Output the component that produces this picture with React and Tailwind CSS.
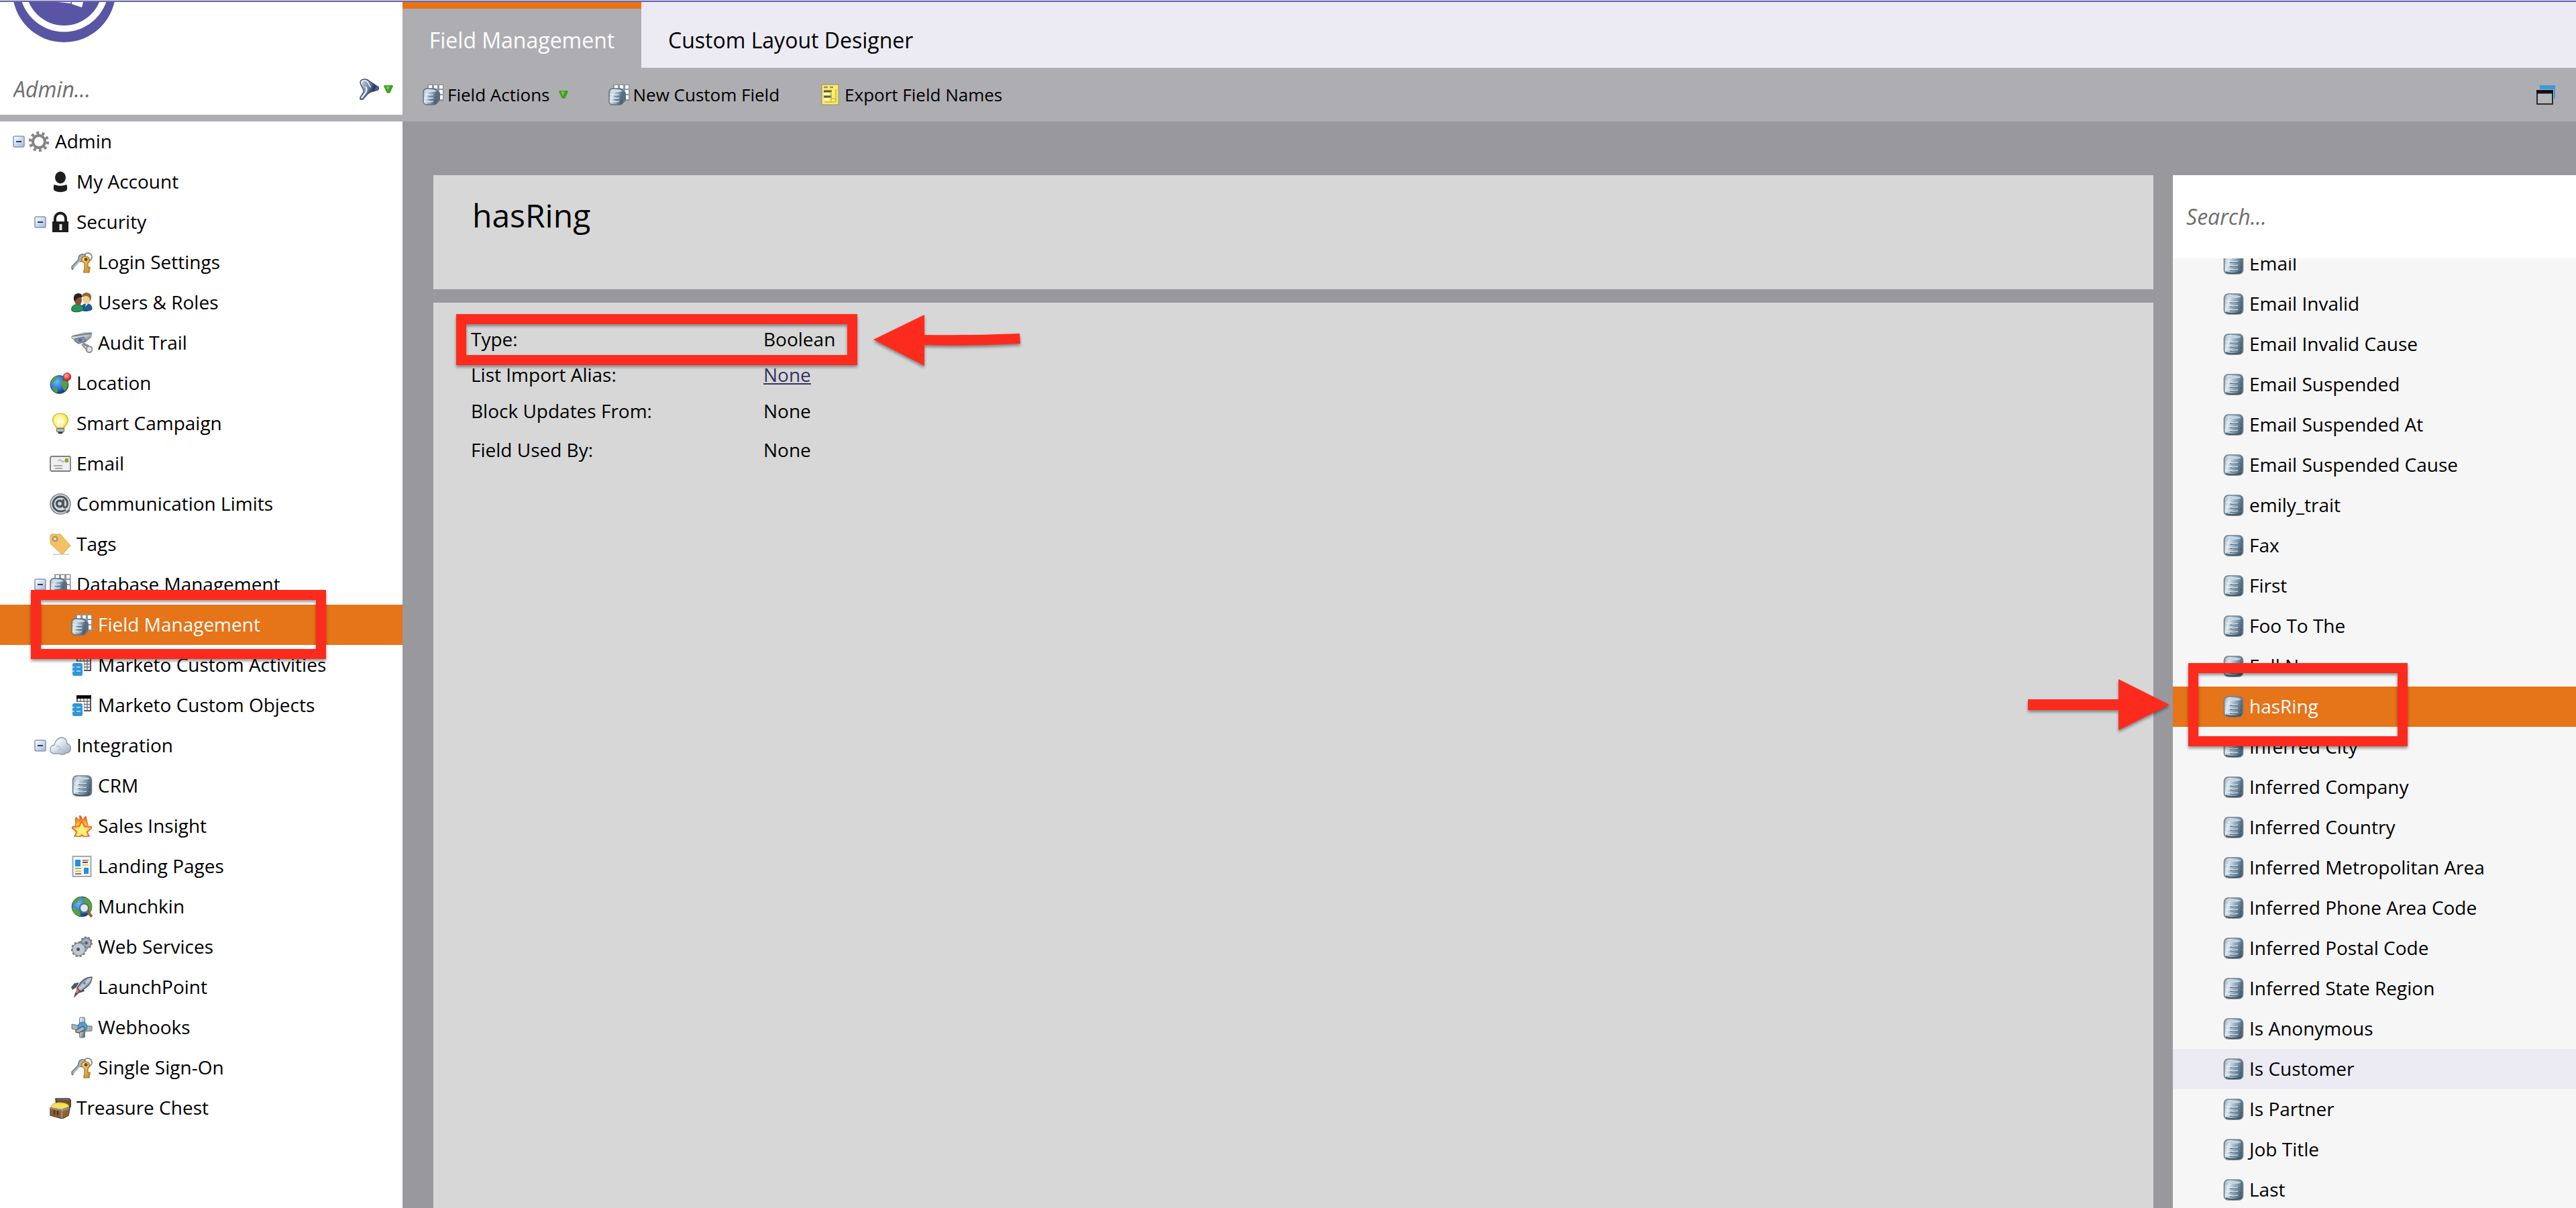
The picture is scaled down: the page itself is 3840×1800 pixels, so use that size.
import { useState } from 'react';

/* ---------- Icons ---------- */

// gradients shared by all the small icons
function IconDefs() {
  return (
    <svg className="absolute h-0 w-0" aria-hidden="true">
      <defs>
        <linearGradient id="steel" x1="0" x2="1" y1="0" y2="0.3">
          <stop offset="0" stopColor="#8b9cab" />
          <stop offset="0.3" stopColor="#dbe8f1" />
          <stop offset="0.65" stopColor="#8fa8bb" />
          <stop offset="1" stopColor="#4b6173" />
        </linearGradient>
        <linearGradient id="steelDiag" x1="0" x2="1" y1="0" y2="1">
          <stop offset="0" stopColor="#f1f4f6" />
          <stop offset="0.5" stopColor="#b9c2c9" />
          <stop offset="1" stopColor="#4b5964" />
        </linearGradient>
        <linearGradient id="rocketFill" x1="0" x2="1" y1="0" y2="1">
          <stop offset="0.3" stopColor="#6b7d8b" />
          <stop offset="0.5" stopColor="#c8d5de" />
          <stop offset="0.75" stopColor="#566774" />
        </linearGradient>
        <linearGradient id="funnelFill" x1="0" x2="1" y1="0" y2="0.4">
          <stop offset="0" stopColor="#dfe6ef" />
          <stop offset="0.5" stopColor="#7688a3" />
          <stop offset="0.8" stopColor="#22375f" />
          <stop offset="1" stopColor="#64779a" />
        </linearGradient>
        <linearGradient id="toggleFill" x1="0" x2="1" y1="0" y2="1">
          <stop offset="0" stopColor="#ffffff" />
          <stop offset="1" stopColor="#a3b6d8" />
        </linearGradient>
        <linearGradient id="gold" x1="0" x2="1" y1="0" y2="1">
          <stop offset="0" stopColor="#ffe48a" />
          <stop offset="1" stopColor="#c98520" />
        </linearGradient>
        <linearGradient id="cloudFill" x1="0" x2="1" y1="0" y2="1">
          <stop offset="0.2" stopColor="#ffffff" />
          <stop offset="1" stopColor="#93a8ba" />
        </linearGradient>
        <linearGradient id="flame" x1="0" x2="0" y1="0" y2="1">
          <stop offset="0" stopColor="#e2401b" />
          <stop offset="0.5" stopColor="#f99a1f" />
          <stop offset="1" stopColor="#ffd23c" />
        </linearGradient>
        <radialGradient id="ocean" cx="0.35" cy="0.35" r="0.7">
          <stop offset="0" stopColor="#6cb8ff" />
          <stop offset="0.6" stopColor="#2a71cc" />
          <stop offset="1" stopColor="#0c3270" />
        </radialGradient>
        <radialGradient id="bulbFill" cx="0.45" cy="0.45" r="0.6">
          <stop offset="0" stopColor="#fffde0" />
          <stop offset="0.6" stopColor="#fff27a" />
          <stop offset="1" stopColor="#e0c81f" />
        </radialGradient>
        <radialGradient id="pin" cx="0.4" cy="0.35" r="0.6">
          <stop offset="0" stopColor="#ffb3ae" />
          <stop offset="1" stopColor="#d41c1c" />
        </radialGradient>
      </defs>
    </svg>
  );
}

function Icon({ children, className = 'h-8 w-8' }) {
  return (
    <svg viewBox="0 0 32 32" className={`${className} flex-shrink-0`} fill="none" aria-hidden="true">
      {children}
    </svg>
  );
}

const GearIcon = () => (
  <Icon>
    <circle cx="16" cy="16" r="13" stroke="#858585" strokeWidth="4.500" strokeDasharray="4 4.168" />
    <circle cx="16" cy="16" r="9" stroke="#858585" strokeWidth="4" />
  </Icon>
);

const PersonIcon = () => (
  <Icon>
    <ellipse cx="16" cy="9.5" rx="8" ry="9" fill="#1d1d1d" />
    <path d="M7 20c5 2.400 13 2.400 18 0 1.500 2 1.500 6 .5 8.500-5 3.500-14 3.500-19 0C5.500 26 5.500 22 7 20z" fill="#1d1d1d" />
  </Icon>
);

const LockIcon = () => (
  <Icon>
    <path d="M8 15v-4.500a8 8 0 0 1 16 0V15" stroke="#1d1d1d" strokeWidth="4" />
    <rect x="4" y="15" width="24" height="16" fill="#1d1d1d" />
    <rect x="14.500" y="19" width="4" height="9" fill="#e8e8e8" />
  </Icon>
);

const KeysIcon = () => (
  <Icon>
    <circle cx="25" cy="8" r="6" stroke="#8b8f93" strokeWidth="2" />
    <path d="M12 6c3-3.500 8-3 9.500 0 1 3-1 7.500-5 8l-3.500 1-11 11.500L1 26v-4l9-9z" fill="#aab0b5" stroke="#666c71" strokeWidth="1.200" />
    <path d="M4 25l9-10" stroke="#e9edf0" strokeWidth="1.500" />
    <path d="M16 10c2-4 9-4 11 0 1.500 3 0 6-2 7v6h3v3h-1v5h-8v-3h1V17c-3-1-5-4-4-7z" fill="url(#gold)" stroke="#a16a18" strokeWidth="1.200" />
    <circle cx="22" cy="11.500" r="2.500" fill="#7a4b12" />
  </Icon>
);

const UsersIcon = () => (
  <Icon>
    <path d="M15 27c0-5 2-9 6-9h4c4 0 6 3 6 8-4 3-12 3-16 1z" fill="#1d5a9e" stroke="#123a6b" />
    <ellipse cx="23" cy="10.500" rx="6" ry="8" fill="#f0cf94" />
    <path d="M16 8c0-5 3-7 7-7s8 3 7 8c0 2-1 4-2 4 0-4-2-7-6-7-2 0-4 1-6 2z" fill="#8f6a35" />
    <path d="M22 18l-1 4 4-4z" fill="#fff" />
    <path d="M1 28c-1-5 1-8 5-9h7c4 1 6 4 5 8-4 3-13 4-17 1z" fill="#22955a" stroke="#0f5a33" />
    <ellipse cx="10.500" cy="12" rx="5.500" ry="8" fill="#8c5233" />
    <path d="M4 11c-1-6 3-9 7-9 5 0 6 4 5 6-3 0-5 0-6 1-2 1-3 3-4 5-1 0-2-1-2-3z" fill="#26221f" />
  </Icon>
);

const CameraIcon = () => (
  <Icon>
    <path d="M1 6l19-5h11l-2 7-7 6-12 3-6-6-3-2z" fill="url(#steelDiag)" stroke="#7d8184" />
    <path d="M2 6l20-3 8-1" stroke="#6f7377" strokeWidth="1.500" />
    <path d="M5 10l14-3 3 6-10 4-6-3z" fill="#8e9499" stroke="#6a6f74" />
    <rect x="11" y="9.500" width="5" height="4.500" fill="#4b6bb5" />
    <path d="M18 16c2 3 5 4 8 5" stroke="#8c9094" strokeWidth="4" />
    <circle cx="27" cy="25.500" r="4.500" fill="#e3e5e7" stroke="#8c9094" strokeWidth="2" />
    <path d="M16 18l8 9" stroke="#8c9094" strokeWidth="2" />
  </Icon>
);

const GlobePinIcon = () => (
  <Icon>
    <circle cx="14.500" cy="18" r="13.500" fill="url(#ocean)" stroke="#28548c" />
    <path d="M3 11c3-4 7-6 10-6 1 2-2 3-3 5s-3 2-4 4-3 1-4 1zM18 13c3-1 7-1 9 1 1 4 0 9-4 13-3 0-3-4-4-7-2-2-3-5-1-7zM5 22c3 0 6 2 7 4 0 3-1 4-2 4-3-1-5-4-6-7z" fill="#57a03c" />
    <path d="M20 12l4-5" stroke="#555" strokeWidth="2" />
    <circle cx="26" cy="6.500" r="5.800" fill="url(#pin)" stroke="#b52323" />
  </Icon>
);

const BulbIcon = () => (
  <Icon>
    <path d="M16 1C8.500 1 4 6 4.500 12c.5 5 5 7 6 12h11c1-5 5.500-7 6-12C28 6 23.500 1 16 1z" fill="url(#bulbFill)" stroke="#c7b43a" strokeWidth="1.200" />
    <path d="M14 22l-2-9 4 2 4-2-2 9" stroke="#fff" strokeWidth="1.500" />
    <rect x="10.500" y="23" width="11" height="6" rx="1.500" fill="#9aa0a6" stroke="#5d6368" />
    <path d="M11 26h10" stroke="#e5e8ea" />
    <path d="M13 30h6" stroke="#2c3034" strokeWidth="2.500" />
  </Icon>
);

const EnvelopeIcon = () => (
  <Icon>
    <rect x="1" y="5" width="30" height="22" rx="2" fill="#efefef" stroke="#7b7f82" strokeWidth="1.800" />
    <rect x="23" y="8" width="5" height="6" fill="#a99a2c" />
    <path d="M13 12c2-3 4-2 5 0s3 1 5-1" stroke="#9fa6bb" strokeWidth="1.500" />
    <path d="M6 19h13M8 23h11" stroke="#a6a8aa" strokeWidth="1.800" />
  </Icon>
);

const AtIcon = () => (
  <Icon>
    <circle cx="16" cy="16" r="15" fill="#d4dae0" stroke="#7c858d" strokeWidth="1.500" />
    <circle cx="15" cy="15.500" r="4.500" stroke="#4d565e" strokeWidth="3.500" />
    <path d="M20.500 9v9c0 5 6 4 6-2.500C26.500 9 22 5 16 5S5 10 5 16s5 11 11 11c3 0 6-1 8-2" stroke="#4d565e" strokeWidth="3" />
    <path d="M25 29l5-4" stroke="#6c757c" strokeWidth="3" />
  </Icon>
);

const TagIcon = () => (
  <Icon>
    <path d="M5 31h24" stroke="#c9c9c9" strokeWidth="1.500" />
    <path d="M1 3l2-2h13l15 17-11 12h-3L1 15z" fill="#f2c163" stroke="#e0a948" />
    <circle cx="8" cy="8" r="3.300" fill="#f7dca4" stroke="#9b9078" strokeWidth="2" />
  </Icon>
);

const DatabaseIcon = () => (
  <Icon>
    <rect x="2.500" y="1" width="28" height="30" rx="6" fill="url(#steel)" stroke="#6c7f8f" strokeWidth="1.600" />
    <path d="M5 5c3-2.500 20-2.500 23 0-4 2.500-19 2.500-23 0z" fill="#c6d6e2" />
    <path d="M5 11c5 2.500 14 2.500 18 1M5 17c5 2.500 14 2.500 18 1M5 23c5 2.500 14 2.500 18 1" stroke="#e9f1f7" strokeWidth="1.300" />
    <path d="M11 14c6 1 12 0 18-2M11 20c6 1 12 0 18-2M11 26c6 1 12 0 18-2" stroke="#5f788b" strokeWidth="1.300" />
    <path d="M5 28c5 3 18 3 23 0" stroke="#41525f" strokeWidth="2" />
  </Icon>
);

const FieldIcon = () => (
  <Icon>
    <rect x="7" y="0.500" width="24.500" height="25" fill="#8b959c" />
    <path d="M9 2h5v5H9zM17 2h5v5h-5zM25 2h5v5h-5zM17 9h5v6h-5zM25 9h5v6h-5zM25 17h5v6h-5z" fill="#fff" />
    <path d="M21 10l5 3v11l-5 6z" fill="#5e6d79" />
    <rect x="1" y="7" width="21" height="24" rx="5" fill="url(#steel)" stroke="#5f707e" strokeWidth="1.400" />
    <path d="M2 10.500c3-2.500 16-2.500 19 0-3 2-16 2-19 0z" fill="#cfdce5" />
    <path d="M2 15c5 2 10 2 14 1M2 20c5 2 10 2 14 1M2 25c5 2 10 2 14 1" stroke="#e9f1f7" strokeWidth="1.200" />
    <path d="M8 18c5 1 9 0 13-1M8 23c5 1 9 0 13-1" stroke="#5f788b" strokeWidth="1.200" />
  </Icon>
);

const CustomObjectIcon = () => (
  <Icon>
    <rect x="9" y="2" width="20" height="22" fill="#fff" stroke="#555" strokeWidth="2" />
    <path d="M8 3.500h22" stroke="#000" strokeWidth="5" />
    <path d="M9 10h20M9 14.500h20M9 19h20M14 6v18M19 6v18M24 6v18" stroke="#6b6b6b" strokeWidth="1.300" />
    <rect x="1" y="11" width="18" height="21" fill="#fff" />
    <rect x="2" y="13" width="15" height="19" rx="2.500" fill="#2f96d8" />
    <path d="M2 19h3M8 19h6M2 25h3M8 25h6" stroke="#bfe1f5" strokeWidth="1.500" />
  </Icon>
);

const CloudIcon = () => (
  <Icon>
    <path d="M8 28c-5 0-8-3-7-7 0-3 3-6 6-6 1-6 6-11 12-11 5 1 7 5 7 9 4 1 6 5 5 9-1 4-4 5-7 5-2 3-7 3-9 1z" fill="url(#cloudFill)" stroke="#8d9ba7" strokeWidth="1.400" />
    <path d="M12 24c2-3 6-4 9-1M10 17c3-1 6 1 6 3" stroke="#b4c3cf" strokeWidth="1.500" />
  </Icon>
);

const FlameIcon = () => (
  <Icon>
    <path d="M6 17C8 11 5 8 7 3c3 1 4 3 5 5 2-3 0-5 1-8 3 2 3 4 4 7 2-2 2-4 5-6 0 4 3 8 3 16z" fill="url(#flame)" stroke="#e2552c" strokeWidth="1" />
    <path d="M16 9l4 7 10 1c1 1 0 3-1 3l-5 5 3 6-7 1-4-2-4 2-7-1 3-6-5-5c-1 0-2-2-1-3l10-1z" fill="#ffb02e" stroke="#dd6a3a" strokeWidth="1.600" />
    <path d="M16 11l3 7 8 1-5 5 2 6-3 .5-5-3-5 3-3-.5 2-6-5-5 8-1z" fill="#fff07e" />
  </Icon>
);

const LandingPageIcon = () => (
  <Icon>
    <rect x="2.500" y="1" width="27" height="30" fill="#f6f6f6" stroke="#a3a8ae" strokeWidth="2" />
    <path d="M6 6h8v10H6zM19 18h7v9h-7z" fill="#1e8fe8" />
    <path d="M17 7h5" stroke="#e25c5c" strokeWidth="2" />
    <path d="M22 7h4" stroke="#6cc07a" strokeWidth="2" />
    <path d="M17 10h8" stroke="#555" strokeWidth="2" />
    <path d="M17 14h9" stroke="#e3cf72" strokeWidth="2" />
    <path d="M6 19h9" stroke="#86c440" strokeWidth="2" />
    <path d="M6 23h9" stroke="#f0bb3a" strokeWidth="2" />
    <path d="M6 27h5" stroke="#777" strokeWidth="2" />
    <path d="M11 27h4" stroke="#d84343" strokeWidth="2" />
  </Icon>
);

const GlobeSearchIcon = () => (
  <Icon>
    <circle cx="16" cy="16" r="15" fill="url(#ocean)" stroke="#23568a" />
    <path d="M3 11C6 4 12 1 17 1c-2 4-6 5-8 9-2 2-4 2-6 1zM19 2c7 1 11 7 12 13 0 4-1 8-3 10l-4-8c-4-3-7-8-5-15zM1 18c5-1 9 2 12 6l1 6C7 30 2 25 1 18z" fill="#5aa334" />
    <circle cx="19.500" cy="18" r="6.500" fill="#d9ecf5" stroke="#5d6a72" strokeWidth="2" />
    <path d="M24 23l7 8" stroke="#99622a" strokeWidth="4" />
  </Icon>
);

const GearsIcon = () => (
  <Icon>
    <circle cx="22.500" cy="10" r="7.500" fill="#a7b0b8" stroke="#6a737b" strokeWidth="1.500" />
    <circle cx="22.500" cy="10" r="8.500" stroke="#7c858d" strokeWidth="2.400" strokeDasharray="3 2.300" />
    <circle cx="22.500" cy="10" r="2.500" fill="#5d666e" />
    <circle cx="11.500" cy="19.500" r="9.500" fill="#c1c9d0" stroke="#858e96" strokeWidth="1.300" />
    <circle cx="11.500" cy="19.500" r="10.500" stroke="#79828a" strokeWidth="2.400" strokeDasharray="3.400 2.600" />
    <circle cx="10.500" cy="19.500" r="2.500" fill="#4a535b" />
  </Icon>
);

const RocketIcon = () => (
  <Icon>
    <path d="M0 16l5-6 7-1-4 7-6 4z" fill="#4f5a64" />
    <path d="M4 32l2-8 12-7 2 5-9 3z" fill="#4b555d" />
    <path d="M8 17l4 1-1 6-4 1z" fill="#ee6a4f" />
    <path d="M31 1c-7 0-12 3-16 7l-6 9 5 5 9-6c5-4 8-9 8-15z" fill="url(#rocketFill)" stroke="#4b5760" strokeWidth="1.400" />
    <circle cx="20" cy="10" r="1.800" fill="#4d7fa8" />
  </Icon>
);

const WebhookIcon = () => (
  <Icon>
    <rect x="12.500" y="1" width="8" height="30" rx="1.500" fill="url(#steelDiag)" stroke="#6c757c" />
    <path d="M1 11l10 2 20 1v7l-11 1L1 18z" fill="#aab2b9" stroke="#6c757c" />
    <circle cx="17" cy="15" r="7" fill="#4f9ed8" stroke="#2f78b0" />
    <path d="M7 20l11-6 3 5-10 5-4-1z" fill="#a9b1b8" stroke="#4d565d" strokeWidth="1.300" />
  </Icon>
);

const ChestIcon = () => (
  <Icon>
    <path d="M9 2l20 0 3 3v7l-3 5-19-4z" fill="#7b4a1f" stroke="#333" strokeWidth="1.500" />
    <path d="M9 2h20l2 3H11z" fill="#5b6670" />
    <path d="M2 15c1-5 6-7 12-7s14 1 15 6l-9 7z" fill="#f6e25a" stroke="#cdb12c" />
    <path d="M1 16l17 3 10-4 2 2-2 10-9 5L1 27z" fill="#9a5e28" stroke="#4c4c4c" strokeWidth="1.400" />
    <path d="M1 16l17 3v12M29 16l-11 4" stroke="#8a929a" strokeWidth="2.600" />
    <path d="M7 19v7M12 20v7" stroke="#5e3412" strokeWidth="2.500" />
  </Icon>
);

const ExportIcon = () => (
  <Icon>
    <rect x="3" y="1" width="25" height="30" fill="#f8ee72" stroke="#9d966a" strokeWidth="1.200" />
    <path d="M6 5h6M15 5h5" stroke="#9c944a" strokeWidth="2.500" />
    <path d="M6 11h12M6 19h12" stroke="#57563c" strokeWidth="3" />
    <path d="M7 15h7M7 23h7" stroke="#fffce0" strokeWidth="3" />
    <path d="M17 11v16M7 27h17M24 8v19M17 22h7" stroke="#c7b93c" strokeWidth="1.600" />
  </Icon>
);

const FunnelIcon = () => (
  <Icon>
    <path d="M2 6C2 1 8 0 13 2l6 4 9 6c2 1 2 4 0 5l-10 3-5 3-7 8-4 0V28l5-8C8 15 2 11 2 6z" fill="url(#funnelFill)" stroke="#3f4f6b" strokeWidth="1.400" />
    <path d="M4 8C4 3 9 2 12 4c3 3 2 6 6 9" stroke="#eef2f8" strokeWidth="1.500" />
    <path d="M4 29l6-8c2-3 2-6 0-9" stroke="#f2f5fa" strokeWidth="2" />
  </Icon>
);

const DownArrow = () => (
  <svg viewBox="0 0 14 12" className="h-3 w-[14px] flex-shrink-0" aria-hidden="true">
    <path d="M0 1.500Q0 0 1.500 0h11Q14 0 14 1.500L9.500 11q-2.500 2-5 0z" fill="#3f9e26" />
    <path d="M3 1.500h6L6 8z" fill="#6ecb4a" />
  </svg>
);

const WindowsIcon = () => (
  <Icon>
    <path d="M7 2h23v20h-2V8H7z" fill="#3a9bdc" />
    <path d="M3 10h23v20H3z" fill="#b7b6ba" stroke="#2b2b2b" strokeWidth="2" />
    <path d="M2 12h25" stroke="#111" strokeWidth="5" />
  </Icon>
);

/* ---------- Data ---------- */

const treeItems = [
  { label: 'Admin', level: 0, icon: GearIcon, expandable: true },
  { label: 'My Account', level: 1, icon: PersonIcon },
  { label: 'Security', level: 1, icon: LockIcon, expandable: true },
  { label: 'Login Settings', level: 2, icon: KeysIcon },
  { label: 'Users & Roles', level: 2, icon: UsersIcon },
  { label: 'Audit Trail', level: 2, icon: CameraIcon },
  { label: 'Location', level: 1, icon: GlobePinIcon },
  { label: 'Smart Campaign', level: 1, icon: BulbIcon },
  { label: 'Email', level: 1, icon: EnvelopeIcon },
  { label: 'Communication Limits', level: 1, icon: AtIcon },
  { label: 'Tags', level: 1, icon: TagIcon },
  { label: 'Database Management', level: 1, icon: FieldIcon, expandable: true },
  { label: 'Field Management', level: 2, icon: FieldIcon, active: true },
  { label: 'Marketo Custom Activities', level: 2, icon: CustomObjectIcon },
  { label: 'Marketo Custom Objects', level: 2, icon: CustomObjectIcon },
  { label: 'Integration', level: 1, icon: CloudIcon, expandable: true },
  { label: 'CRM', level: 2, icon: DatabaseIcon },
  { label: 'Sales Insight', level: 2, icon: FlameIcon },
  { label: 'Landing Pages', level: 2, icon: LandingPageIcon },
  { label: 'Munchkin', level: 2, icon: GlobeSearchIcon },
  { label: 'Web Services', level: 2, icon: GearsIcon },
  { label: 'LaunchPoint', level: 2, icon: RocketIcon },
  { label: 'Webhooks', level: 2, icon: WebhookIcon },
  { label: 'Single Sign-On', level: 2, icon: KeysIcon },
  { label: 'Treasure Chest', level: 1, icon: ChestIcon },
];

const fields = [
  'Email', 'Email Invalid', 'Email Invalid Cause', 'Email Suspended', 'Email Suspended At',
  'Email Suspended Cause', 'emily_trait', 'Fax', 'First', 'Foo To The', 'Full Name', 'hasRing',
  'Inferred City', 'Inferred Company', 'Inferred Country', 'Inferred Metropolitan Area',
  'Inferred Phone Area Code', 'Inferred Postal Code', 'Inferred State Region', 'Is Anonymous',
  'Is Customer', 'Is Partner', 'Job Title', 'Last',
];

const details = [
  { label: 'Type:', value: 'Boolean', className: 'h-[52px]' },
  { label: 'List Import Alias:', value: 'None', link: true, className: 'h-[54px]' },
  { label: 'Block Updates From:', value: 'None', className: 'h-[54px]' },
  { label: 'Field Used By:', value: 'None', className: 'h-[62px]' },
];

const INDENT = ['pl-[10px]', 'pl-[42px]', 'pl-[74px]'];

/* ---------- Callouts ---------- */

function CalloutBox({ className }) {
  return (
    <div className={`absolute z-10 pointer-events-none border-[15px] border-[#fd2b1d] drop-shadow-[0_3px_2px_rgba(0,0,0,0.4)] ${className}`} />
  );
}

function CalloutArrow({ className, viewBox, d }) {
  return (
    <svg viewBox={viewBox} className={`absolute z-10 pointer-events-none drop-shadow-[0_3px_2px_rgba(0,0,0,0.4)] ${className}`} aria-hidden="true">
      <path d={d} fill="#fd2b1d" />
    </svg>
  );
}

/* ---------- Sidebar ---------- */

function TreeRow({ item }) {
  return (
    <li className={`relative flex items-center h-[60px] ${INDENT[item.level]} ${item.active ? 'bg-[#e67419] text-white' : 'text-black'}`}>
      <span className="flex items-center justify-center w-8 pl-1 flex-shrink-0">
        {item.expandable && (
          <button type="button" aria-label={`Collapse ${item.label}`} className="block">
            <svg viewBox="0 0 18 18" className="h-[18px] w-[18px]" aria-hidden="true">
              <rect x="1" y="1" width="16" height="16" rx="2" fill="url(#toggleFill)" stroke="#8397bb" strokeWidth="1.500" />
              <path d="M5 9h8" stroke="#2c3e5e" strokeWidth="2" />
            </svg>
          </button>
        )}
      </span>
      <a href="#" aria-current={item.active ? 'page' : undefined} className="flex items-center gap-2 pr-4 whitespace-nowrap">
        <item.icon />
        <span className="pb-[2px]">{item.label}</span>
      </a>
      {item.active && <CalloutBox className="left-[46px] -top-[22px] h-[103px] w-[440px]" />}
    </li>
  );
}

function Sidebar() {
  const [query, setQuery] = useState('');

  return (
    <aside className="w-[600px] flex-shrink-0 flex flex-col bg-white">
      <header className="flex-shrink-0 border-b-[10px] border-[#aeadb2]">
        <svg viewBox="0 3 200 60" className="block h-[60px] w-[200px]" aria-hidden="true">
          <circle cx="95.500" cy="-14" r="77" fill="#5a54a4" />
          <circle cx="95.500" cy="-19" r="66.500" fill="#fff" />
          <circle cx="95.500" cy="-19" r="57" fill="#5a54a4" />
          <path d="M86 3h20l-1 2zM107 3h17l-2 8-15-5z" fill="#fff" />
        </svg>
        <div className="flex items-center h-[108px] pl-5 pr-[14px] pt-8">
          <input
            type="text"
            aria-label="Filter admin tree"
            placeholder="Admin..."
            value={query}
            onChange={(e) => setQuery(e.target.value)}
            className="flex-1 min-w-0 text-[32px] leading-10 italic bg-transparent outline-none placeholder:text-[#6e6e6e] placeholder:opacity-100"
          />
          <button type="button" aria-label="Filter options" className="flex items-center gap-[5px]">
            <FunnelIcon />
            <DownArrow />
          </button>
        </div>
      </header>

      <nav aria-label="Admin">
        <ul>
          {treeItems.map((item) => (
            <TreeRow key={item.label} item={item} />
          ))}
        </ul>
      </nav>
    </aside>
  );
}

/* ---------- Main area ---------- */

function Tabs() {
  return (
    <nav className="flex h-[98px] flex-shrink-0 bg-[#ecebf3] text-[32px]">
      <a href="#" aria-current="page" className="flex items-center justify-center w-[356px] pt-[6px] border-t-[10px] border-[#e67419] bg-[#aeadb2] text-white">
        Field Management
      </a>
      <a href="#" className="flex items-center px-10 pt-4">Custom Layout Designer</a>
    </nav>
  );
}

function Toolbar() {
  return (
    <div className="flex items-center h-20 flex-shrink-0 pl-[30px] pr-[29px] bg-[#aeadb2] text-[26px]">
      <button type="button" className="flex items-center gap-[5px]">
        <FieldIcon />
        Field Actions
        <span className="pl-2"><DownArrow /></span>
      </button>
      <button type="button" className="flex items-center gap-[5px] ml-[60px]">
        <FieldIcon />
        New Custom Field
      </button>
      <button type="button" className="flex items-center gap-[5px] ml-[60px]">
        <ExportIcon />
        Export Field Names
      </button>
      <button type="button" aria-label="Open in new window" className="ml-auto">
        <WindowsIcon />
      </button>
    </div>
  );
}

function FieldDetails() {
  return (
    <section className="flex-1 min-w-0 flex flex-col gap-5">
      <div className="h-[170px] flex-shrink-0 pl-[58px] pt-[30px] bg-[#d7d7d7]">
        <h1 className="text-[48px] leading-[60px]">hasRing</h1>
      </div>
      <div className="flex-1 pt-7 pl-14 bg-[#d7d7d7]">
        <dl>
          {details.map((row) => (
            <div key={row.label} className={`relative flex items-center ${row.className}`}>
              <dt className="w-[436px]">{row.label}</dt>
              <dd>
                {row.link ? <a href="#" className="text-[#37325f] underline">{row.value}</a> : row.value}
              </dd>
              {row.label === 'Type:' && (
                <>
                  <CalloutBox className="-left-[22px] -top-[11px] h-[76px] w-[598px]" />
                  <CalloutArrow
                    className="left-[600px] -top-[10px] h-[76px] w-[219px]"
                    viewBox="0 0 219 76"
                    d="M0 37L76 0v30q71 1 142-2l1 15q-72 4-143 2v31z"
                  />
                </>
              )}
            </div>
          ))}
        </dl>
      </div>
    </section>
  );
}

function FieldList() {
  const [query, setQuery] = useState('');

  return (
    <aside className="relative w-[601px] flex-shrink-0 flex flex-col bg-[#f6f6f6]">
      <div className="flex items-center h-[124px] flex-shrink-0 px-5 bg-white">
        <input
          type="search"
          aria-label="Search fields"
          placeholder="Search..."
          value={query}
          onChange={(e) => setQuery(e.target.value)}
          className="w-full text-[32px] leading-10 italic bg-transparent outline-none placeholder:text-[#6e6e6e] placeholder:opacity-100"
        />
      </div>
      {/* list is scrolled part-way through its first row */}
      <div className="flex-1 min-h-0 overflow-hidden">
        <ul className="-mt-[22px]">
          {fields.map((name) => (
            <li
              key={name}
              className={`relative h-[60px] ${name === 'hasRing' ? 'bg-[#e67419] text-white' : ''} ${name === 'Is Customer' ? 'bg-[#ecebf3]' : ''}`}
            >
              <a href="#" className="flex items-center gap-2 h-full pl-[74px]">
                <DatabaseIcon />
                <span className="pb-[2px]">{name}</span>
              </a>
              {name === 'hasRing' && <CalloutBox className="left-[23px] -top-[35px] h-[124px] w-[327px]" />}
            </li>
          ))}
        </ul>
      </div>
      <CalloutArrow
        className="-left-[216px] top-[751px] h-[76px] w-[211px]"
        viewBox="0 0 211 76"
        d="M0 30h135V0l76 38-76 38V46H0z"
      />
    </aside>
  );
}

export default function App() {
  return (
    <div className="h-screen overflow-hidden flex flex-col bg-white text-black text-[28px] font-['Open_Sans','Noto_Sans',sans-serif]">
      <IconDefs />
      <div className="h-[3px] flex-shrink-0 border-t border-[#dcdce0] bg-[#6a66b0]" />
      <div className="flex flex-1 min-h-0">
        <Sidebar />
        <main className="flex-1 min-w-0 flex flex-col bg-[#99989d]">
          <Tabs />
          <Toolbar />
          <div className="flex flex-1 min-h-0 gap-[29px] pt-20 pl-[46px]">
            <FieldDetails />
            <FieldList />
          </div>
        </main>
      </div>
    </div>
  );
}
